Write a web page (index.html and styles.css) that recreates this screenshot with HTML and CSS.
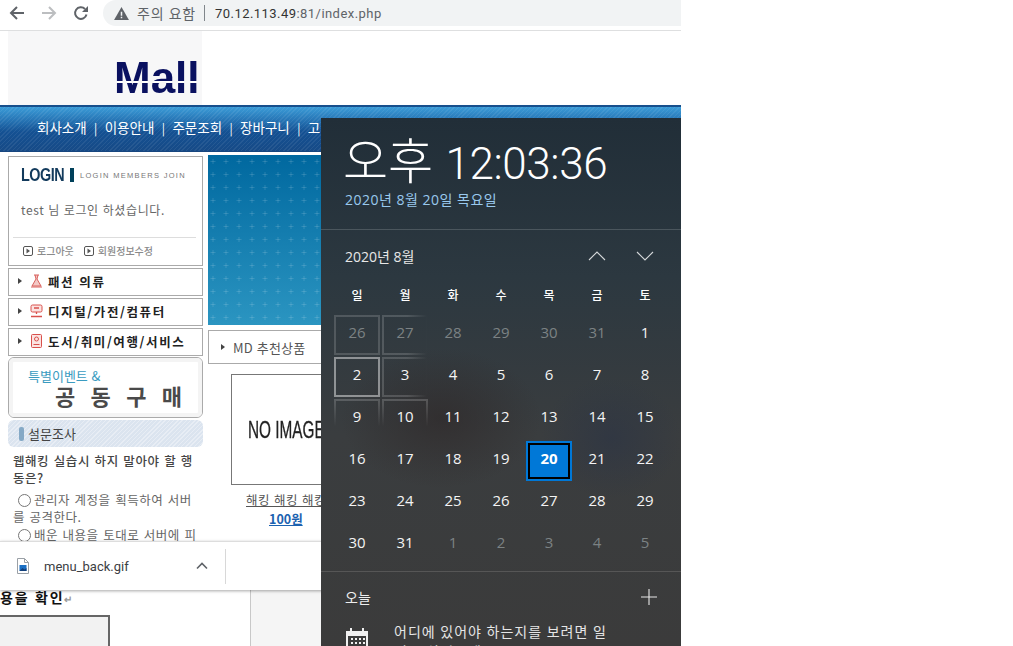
FILE: index.html
```html
<!DOCTYPE html>
<html lang="ko">
<head>
  <meta charset="UTF-8" />
  <title>Mall</title>
  <link rel="stylesheet" href="styles.css">
</head>
<body>
  <div class="screen">
    <!-- browser toolbar -->
    <div class="toolbar">
      <svg class="nav-icon" viewBox="0 0 16 16"><path d="M15 8H2M8 2L2 8l6 6" fill="none" stroke="#5f6368" stroke-width="2"/></svg>
      <svg class="nav-icon" viewBox="0 0 16 16"><path d="M1 8h13M8 2l6 6-6 6" fill="none" stroke="#bcbec0" stroke-width="2"/></svg>
      <svg class="nav-icon" viewBox="0 0 16 16"><path d="M13.5 9.5A5.8 5.8 0 1 1 12 4" fill="none" stroke="#5f6368" stroke-width="2"/><path d="M15 1v6H9z" fill="#5f6368"/></svg>
      <div class="omnibox">
        <svg class="warn" viewBox="0 0 16 14"><path d="M8 0l8 14H0z" fill="#5f6368"/><path d="M7.2 5h1.6v4.5H7.2zM7.2 10.5h1.6V12H7.2z" fill="#f1f3f4"/></svg>
        <span class="warn-text">주의 요함</span>
        <span class="omni-sep"></span>
        <span class="url">70.12.113.49<span class="url-dim">:81/index.php</span></span>
      </div>
    </div>

    <!-- the shop page -->
    <div class="page">
      <div class="logo"><span class="logo-text">Mall</span></div>
      <div class="menubar">
        <span>회사소개</span><i>|</i><span>이용안내</span><i>|</i><span>주문조회</span><i>|</i><span>장바구니</span><i>|</i><span>고객센터</span>
      </div>
      <div class="content">
        <aside class="sidebar">
          <div class="login-box">
            <div class="login-head">
              <span class="login-title">LOGIN</span>
              <span class="login-bar"></span>
              <span class="login-sub">LOGIN MEMBERS JOIN</span>
            </div>
            <p class="login-msg">test 님 로그인 하셨습니다.</p>
            <div class="login-links">
              <span class="login-link"><svg viewBox="0 0 10 10"><rect x=".5" y=".5" width="9" height="9" rx="1.5" fill="none" stroke="#555"/><path d="M3.5 2.5L7 5 3.5 7.5z" fill="#555"/></svg>로그아웃</span>
              <span class="login-link"><svg viewBox="0 0 10 10"><rect x=".5" y=".5" width="9" height="9" rx="1.5" fill="none" stroke="#555"/><path d="M3.5 2.5L7 5 3.5 7.5z" fill="#555"/></svg>회원정보수정</span>
            </div>
          </div>
          <div class="cat">
            <span class="caret"></span>
            <svg class="cat-icon" viewBox="0 0 13 14"><path d="M4 1h5M5 1l1 4-4 7h9L7 5l1-4M1 13h11" fill="#f3c9c6" stroke="#d9605c"/></svg>
            <span>패션 의류</span>
          </div>
          <div class="cat">
            <span class="caret"></span>
            <svg class="cat-icon" viewBox="0 0 13 14"><rect x="1" y="1" width="11" height="7" rx="1.5" fill="#fbe3e1" stroke="#d9504c"/><path d="M4 4h5M6.500 8v2M1 12.500h11" fill="none" stroke="#d9504c" stroke-width="1.300"/></svg>
            <span>디지털/가전/컴퓨터</span>
          </div>
          <div class="cat">
            <span class="caret"></span>
            <svg class="cat-icon" viewBox="0 0 13 14"><rect x="1.500" y=".5" width="10" height="13" rx="1" fill="#fbe3e1" stroke="#d9504c"/><circle cx="6.500" cy="5" r="2" fill="none" stroke="#d9504c"/><path d="M3.500 10.500h6" stroke="#d9504c"/></svg>
            <span>도서/취미/여행/서비스</span>
          </div>
          <div class="event">
            <span class="event-top">특별이벤트 &amp;</span>
            <span class="event-big">공 동 구 매</span>
          </div>
          <div class="poll-head"><span class="poll-pill"></span>설문조사</div>
          <p class="poll-q">웹해킹 실습시 하지 말아야 할 행동은?</p>
          <label class="poll-opt"><input type="radio" name="poll">관리자 계정을 획득하여 서버를 공격한다.</label>
          <label class="poll-opt"><input type="radio" name="poll">배운 내용을 토대로 서버에 피해를 준다.</label>
        </aside>

        <section class="main">
          <div class="hero">
            <svg width="100%" height="100%">
              <defs>
                <pattern id="plus" x="2" y="4" width="13" height="13" patternUnits="userSpaceOnUse">
                  <path d="M3 0v5M.5 2.500h5" stroke="#fff" stroke-opacity=".13"/>
                </pattern>
              </defs>
              <rect width="100%" height="100%" fill="url(#plus)"/>
            </svg>
          </div>
          <div class="md-title"><span class="caret"></span>MD 추천상품</div>
          <div class="product">
            <div class="no-image"><span>NO IMAGE</span></div>
            <a class="product-name" href="#">해킹 해킹 해킹</a>
            <a class="product-price" href="#">100원</a>
          </div>
          <div class="product-next"></div>
        </section>
      </div>
    </div>

    <!-- download shelf -->
    <div class="shelf">
      <svg class="file-icon" viewBox="0 0 12 16"><path d="M.5.5h7l4 4v11H.5z" fill="#fff" stroke="#9aa0a6"/><path d="M7.500.5v4h4" fill="none" stroke="#9aa0a6"/><rect x="2.500" y="7" width="7" height="6" fill="#1a6fc4"/><path d="M2.500 13l3-3 2 1.500 2-1.500v3z" fill="#123f7a"/></svg>
      <span class="file-name">menu_back.gif</span>
      <svg class="file-chev" viewBox="0 0 12 8"><path d="M1 6.500l5-5 5 5" fill="none" stroke="#5f6368" stroke-width="1.600"/></svg>
      <span class="shelf-sep"></span>
    </div>

    <!-- document behind the browser -->
    <div class="doc">
      <div class="doc-sheet">
        <p class="doc-line">용을 확인<span class="doc-mark">↵</span></p>
        <div class="doc-table"></div>
      </div>
      <div class="doc-side"></div>
    </div>

    <!-- windows clock flyout -->
    <div class="flyout">
      <div class="clock">
        <div class="clock-time"><span class="clock-ampm">오후</span> 12:03:36</div>
        <div class="clock-date">2020년 8월 20일 목요일</div>
      </div>
      <div class="cal">
        <div class="cal-head">
          <span>2020년 8월</span>
          <span class="cal-arrows">
            <svg viewBox="0 0 18 10"><path d="M1 9l8-8 8 8" fill="none" stroke="#d5d8da" stroke-width="1.100"/></svg>
            <svg viewBox="0 0 18 10"><path d="M1 1l8 8 8-8" fill="none" stroke="#d5d8da" stroke-width="1.100"/></svg>
          </span>
        </div>
        <div class="cal-grid">
          <span class="dow">일</span><span class="dow">월</span><span class="dow">화</span><span class="dow">수</span><span class="dow">목</span><span class="dow">금</span><span class="dow">토</span>
          <span class="day dim glow">26</span><span class="day dim glow-fade">27</span><span class="day dim">28</span><span class="day dim">29</span><span class="day dim">30</span><span class="day dim">31</span><span class="day">1</span>
          <span class="day hot">2</span><span class="day glow-fade">3</span><span class="day">4</span><span class="day">5</span><span class="day">6</span><span class="day">7</span><span class="day">8</span>
          <span class="day glow-low">9</span><span class="day glow-low">10</span><span class="day">11</span><span class="day">12</span><span class="day">13</span><span class="day">14</span><span class="day">15</span>
          <span class="day">16</span><span class="day">17</span><span class="day">18</span><span class="day">19</span><span class="day today">20</span><span class="day">21</span><span class="day">22</span>
          <span class="day">23</span><span class="day">24</span><span class="day">25</span><span class="day">26</span><span class="day">27</span><span class="day">28</span><span class="day">29</span>
          <span class="day">30</span><span class="day">31</span><span class="day dim">1</span><span class="day dim">2</span><span class="day dim">3</span><span class="day dim">4</span><span class="day dim">5</span>
        </div>
      </div>
      <div class="agenda">
        <div class="agenda-head">
          <span>오늘</span>
          <svg viewBox="0 0 16 16"><path d="M8 0v16M0 8h16" stroke="#e8e8e8" stroke-width="1.100"/></svg>
        </div>
        <div class="agenda-row">
          <svg class="agenda-icon" viewBox="0 0 22 22"><path d="M0 3h4V0h2v3h10V0h2v3h4v19H0z" fill="#f0f0f0"/><path d="M2 8h18v12H2z" fill="#3c3c3c"/><path d="M5 10h2v2H5zM9 10h2v2H9zM13 10h2v2h-2zM17 10h2v2h-2zM5 14h2v2H5zM9 14h2v2H9zM13 14h2v2h-2zM17 14h2v2h-2z" fill="#f0f0f0"/></svg>
          <p class="agenda-text">어디에 있어야 하는지를 보려면 일정을 살펴보세요.</p>
        </div>
      </div>
    </div>
  </div>
</body>
</html>
```

FILE: styles.css
```css
html, body {
  margin: 0;
  height: 100%;
  background: #fff;
  overflow: hidden;
}
body {
  font-family: "Liberation Sans", "Noto Sans CJK KR", sans-serif;
  color: #333;
}
p {
  margin: 0;
}
.screen {
  position: relative;
  width: 681px;
  height: 646px;
  overflow: hidden;
  background: #fff;
}

/* toolbar */
.toolbar {
  display: flex;
  align-items: center;
  height: 30px;
  border-bottom: 1px solid #dedfe0;
  box-sizing: content-box;
  padding-left: 9px;
  background: #fff;
}
.nav-icon {
  width: 16px;
  height: 16px;
  margin-right: 16px;
  margin-top: -5px;
}
.omnibox {
  display: flex;
  align-items: center;
  flex: 1;
  height: 26px;
  margin-top: -4px;
  margin-left: -2px;
  padding-left: 11px;
  background: #f1f3f4;
  border-radius: 13px 0 0 13px;
  font-family: "Roboto", "Noto Sans CJK KR", sans-serif;
  font-size: 13px;
}
.warn {
  width: 15px;
  height: 13px;
  margin-right: 8px;
}
.warn-text {
  color: #5f6368;
  font-size: 14px;
  letter-spacing: 0.8px;
}
.omni-sep {
  width: 1px;
  height: 16px;
  margin: 0 10px 0 8px;
  background: #80868b;
}
.url {
  color: #333;
  letter-spacing: 0.45px;
}
.url-dim {
  color: #5f6368;
}

/* shop page */
.page {
  height: 510px;
  overflow: hidden;
  background: #fff;
}
.logo {
  display: flex;
  align-items: flex-end;
  box-sizing: border-box;
  width: 194px;
  height: 74px;
  margin-left: 8px;
  padding-left: 106px;
  background: #f7f7f8;
}
.logo-text {
  font-size: 44px;
  font-weight: bold;
  line-height: 44px;
  margin-bottom: 5px;
  color: transparent;
  background: linear-gradient(#0a1160 0 25px, #fff 25px 27px, #0a1160 27px);
  -webkit-background-clip: text;
  background-clip: text;
}
.menubar {
  display: flex;
  align-items: center;
  box-sizing: border-box;
  height: 49px;
  padding: 0 0 5px 37px;
  border-top: 2px solid #174f8c;
  border-bottom: 2px solid #fff;
  box-shadow: inset 0 -1px 0 #17467f;
  background:
    repeating-linear-gradient(135deg, rgba(255,255,255,0.07) 0 1px, transparent 1px 3px),
    linear-gradient(#3b9cd8, #2674b4 30%, #145193 55%, #174a86);
  color: #fff;
  font-family: "Noto Sans CJK KR", sans-serif;
  font-size: 13.500px;
  white-space: nowrap;
}
.menubar i {
  display: block;
  width: 18px;
  text-align: center;
  font-style: normal;
  font-size: 12px;
}
.content {
  display: flex;
  gap: 5px;
  padding: 1px 0 0 8px;
}
.sidebar {
  flex: none;
  width: 195px;
  padding-top: 1px;
  font-family: "Noto Sans CJK KR", sans-serif;
}
.caret {
  display: inline-block;
  flex: none;
  width: 0;
  height: 0;
  border-left: 4px solid #444;
  border-top: 3px solid transparent;
  border-bottom: 3px solid transparent;
}

/* login */
.login-box {
  box-sizing: border-box;
  height: 110px;
  border: 1px solid #aaa;
  padding: 0 9px 0 4px;
}
.login-head {
  display: flex;
  align-items: center;
  height: 36px;
  padding-left: 8px;
}
.login-title {
  flex: none;
  width: 42px;
  font-family: "Liberation Sans", sans-serif;
  font-size: 18px;
  font-weight: bold;
  color: #123a5c;
  letter-spacing: -0.6px;
  transform: scaleX(0.8);
  transform-origin: left center;
}
.login-bar {
  flex: none;
  width: 4px;
  height: 14px;
  margin: 0 6px 0 7px;
  background: #00405a;
}
.login-sub {
  font-family: "Liberation Sans", sans-serif;
  font-size: 7.500px;
  letter-spacing: 1.300px;
  color: #777;
  white-space: nowrap;
}
.login-msg {
  margin: 7px 0 0 8px;
  height: 37px;
  font-size: 12px;
  line-height: 20px;
  letter-spacing: 0.6px;
  color: #666;
}
.login-links {
  display: flex;
  gap: 10px;
  margin-right: -3px;
  padding: 6px 0 0 10px;
  border-top: 1px solid #ddd;
}
.login-link {
  display: flex;
  align-items: center;
  gap: 4px;
  font-size: 10px;
  line-height: 13px;
  color: #8a8a8a;
  font-weight: 500;
}
.login-link svg {
  width: 10px;
  height: 10px;
}

/* categories */
.cat {
  display: flex;
  align-items: center;
  box-sizing: border-box;
  height: 28px;
  margin-top: 2px;
  padding: 0 0 2px 9px;
  border: 1px solid #aaa;
  font-size: 12.500px;
  font-weight: 700;
  letter-spacing: 1.600px;
  color: #222;
  white-space: nowrap;
}
.cat-icon {
  width: 13px;
  height: 14px;
  margin: 0 5px 0 8px;
}
.event {
  display: flex;
  flex-direction: column;
  box-sizing: border-box;
  height: 61px;
  margin-top: 1px;
  border: 1px solid #aaa;
  border-radius: 6px;
  outline: 4px solid #f4f4f4;
  outline-offset: -5px;
  padding: 9px 0 0 19px;
}
.event-top {
  font-size: 13px;
  line-height: 18px;
  color: #3a9bc0;
}
.event-big {
  margin: 0 0 0 27px;
  font-size: 22px;
  font-weight: 700;
  line-height: 20px;
  letter-spacing: 4.600px;
  color: #4a4a4a;
  white-space: nowrap;
}

/* poll */
.poll-head {
  display: flex;
  align-items: center;
  height: 27px;
  margin-top: 2px;
  padding-left: 11px;
  border-radius: 6px;
  background:
    repeating-linear-gradient(135deg, rgba(255,255,255,0.35) 0 1px, transparent 1px 3px),
    #dbe4ef;
  font-size: 13px;
  color: #444;
}
.poll-pill {
  width: 5px;
  height: 14px;
  margin-right: 4px;
  border-radius: 2px;
  background: #85a9c6;
}
.poll-q {
  margin: 5px 0 0 5px;
  font-size: 12.500px;
  font-weight: 500;
  line-height: 17px;
  letter-spacing: 0.550px;
  word-spacing: 0.600px;
  color: #444;
}
.poll-opt {
  display: block;
  margin: 5px 0 0 5px;
  font-size: 12.500px;
  line-height: 17px;
  letter-spacing: 0.500px;
  word-spacing: 0.600px;
  color: #666;
}
.poll-opt + .poll-opt {
  margin-top: 1px;
}
.poll-opt input {
  width: 13px;
  height: 13px;
  margin: 0 3px 0 5px;
  vertical-align: -2px;
}

/* main column */
.main {
  flex: 1;
  min-width: 0;
}
.hero {
  height: 170px;
  background: linear-gradient(#00689f, #2b95c1);
}
.hero svg {
  display: block;
}
.md-title {
  display: flex;
  align-items: center;
  gap: 8px;
  box-sizing: border-box;
  height: 34px;
  margin-top: 5px;
  padding-left: 12px;
  border: 1px solid #aaa;
  font-family: "Noto Sans CJK KR", sans-serif;
  font-size: 13px;
  letter-spacing: 0.200px;
  color: #555;
}
.product {
  display: flex;
  flex-direction: column;
  align-items: center;
  width: 186px;
  margin: 10px 0 0 23px;
  font-family: "Noto Sans CJK KR", sans-serif;
  font-size: 12.500px;
}
.no-image {
  display: flex;
  align-items: center;
  box-sizing: border-box;
  width: 100%;
  height: 111px;
  padding-left: 16px;
  border: 1px solid #777;
  overflow: hidden;
  font-family: "Liberation Sans", sans-serif;
  font-size: 24px;
  color: #222;
  white-space: nowrap;
}
.no-image span {
  display: block;
  transform: scaleX(0.64);
  transform-origin: left center;
  -webkit-text-stroke: 0.3px #222;
}
.product a {
  align-self: flex-start;
  line-height: 19px;
}
.product-name {
  margin: 5px 0 0 15px;
  color: #555;
  letter-spacing: 0.5px;
  white-space: nowrap;
}
.product-price {
  margin-left: 38px;
  color: #1b62b0;
  font-weight: 700;
}
.product-next {
  width: 186px;
  margin: 13px 0 0 23px;
  border-top: 1px solid #888;
}

/* download shelf */
.shelf {
  position: relative;
  z-index: 1;
  display: flex;
  align-items: center;
  height: 48px;
  border-top: 1px solid #ddd;
  background: #fff;
  box-shadow: 0 1px 3px rgba(0,0,0,0.35);
  font-family: "Roboto", sans-serif;
  font-size: 13px;
}
.file-icon {
  width: 12px;
  height: 16px;
  margin: 0 15px 0 17px;
}
.file-name {
  color: #3c4043;
  width: 152px;
}
.file-chev {
  width: 12px;
  height: 8px;
  margin-right: 17px;
}
.shelf-sep {
  width: 1px;
  height: 35px;
  background: #d8d8d8;
}

/* document under the browser */
.doc {
  display: flex;
  height: 56px;
  background: #fff;
}
.doc-sheet {
  width: 250px;
  border-right: 1px solid #c8c8c8;
  overflow: hidden;
}
.doc-line {
  height: 25px;
  font-family: "Noto Sans CJK KR", sans-serif;
  font-size: 14px;
  font-weight: 700;
  line-height: 14px;
  letter-spacing: 1.800px;
  color: #111;
  white-space: nowrap;
}
.doc-mark {
  color: #999;
  font-size: 10px;
}
.doc-table {
  box-sizing: border-box;
  width: 110px;
  height: 40px;
  border: 2px solid #666;
  border-left: 0;
  background: #f2f2f2;
}
.doc-side {
  flex: 1;
  background: #f5f5f5;
}

/* clock flyout */
.flyout {
  position: absolute;
  z-index: 2;
  top: 118px;
  left: 321px;
  width: 360px;
  height: 528px;
  overflow: hidden;
  color: #fff;
  background:
    radial-gradient(ellipse 70px 60px at 290px 320px, rgba(40,50,70,0.5), transparent),
    radial-gradient(ellipse 100px 70px at 120px 300px, rgba(45,38,38,0.6), transparent),
    linear-gradient(#212e38, #2c3840 30%, #3a3d3f 60%, #3b3b3b);
  font-family: "Open Sans", "Noto Sans CJK KR", sans-serif;
}
.clock {
  height: 111px;
  padding-left: 24px;
  border-bottom: 1px solid #4b565d;
}
.clock-time {
  height: 63px;
  padding-top: 9px;
  margin-left: -2px;
  font-family: "Roboto", sans-serif;
  font-size: 44px;
  font-weight: 300;
  line-height: 61px;
  letter-spacing: -0.400px;
  white-space: nowrap;
}
.clock-ampm {
  font-size: 49px;
  font-family: "Noto Sans CJK KR", sans-serif;
  font-weight: 300;
  letter-spacing: 0;
  margin-right: 2px;
}
.clock-date {
  font-size: 14px;
  line-height: 20px;
  letter-spacing: 0.5px;
  color: #99c9ee;
}
.cal {
  height: 342px;
  box-sizing: border-box;
  padding: 0 0 0 13px;
  border-bottom: 1px solid #565656;
}
.cal-head {
  display: flex;
  justify-content: space-between;
  align-items: center;
  box-sizing: border-box;
  height: 50px;
  padding: 2px 27px 0 11px;
  font-size: 14px;
  color: #e8e8e8;
}
.cal-arrows {
  display: flex;
  gap: 30px;
}
.cal-arrows svg {
  width: 18px;
  height: 10px;
}
.cal-grid {
  display: grid;
  grid-template-columns: repeat(7, 46px);
  grid-template-rows: 33px repeat(6, 40px);
  gap: 2px;
}
.dow, .day {
  display: flex;
  align-items: center;
  justify-content: center;
  box-sizing: border-box;
}
.dow {
  height: 30px;
  font-size: 12px;
  font-weight: 500;
}
.day {
  padding-bottom: 6px;
  font-size: 15px;
  color: #f4f4f4;
  border: 2px solid transparent;
}
.dim {
  color: #7c8284;
}
.glow {
  border-color: rgba(255,255,255,0.16);
}
.glow-fade {
  border-image: linear-gradient(90deg, rgba(255,255,255,0.16) 55%, transparent) 1;
}
.glow-low {
  border-image: linear-gradient(rgba(255,255,255,0.18), transparent 70%) 1;
}
.hot {
  border-color: rgba(255,255,255,0.45);
}
.today {
  border-color: #0078d7;
  background: #0078d7;
  box-shadow: inset 0 0 0 2px #000;
  color: #fff;
  font-weight: 700;
}
.agenda {
  padding: 0 24px;
}
.agenda-head {
  display: flex;
  justify-content: space-between;
  align-items: center;
  height: 50px;
  font-size: 14px;
  color: #eee;
}
.agenda-head svg {
  width: 16px;
  height: 16px;
}
.agenda-row {
  display: flex;
  gap: 26px;
}
.agenda-icon {
  flex: none;
  width: 22px;
  height: 22px;
  margin: 6px 0 0 1px;
}
.agenda-text {
  width: 225px;
  font-size: 14px;
  line-height: 20px;
  color: #e6e6e6;
  letter-spacing: 1px;
}
```
